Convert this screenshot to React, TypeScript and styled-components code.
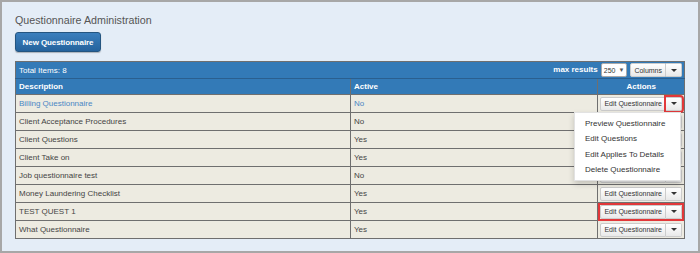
import styled, { createGlobalStyle, css } from 'styled-components';

const HEADER_BLUE = '#337ab7';
const ROW_BG = '#edebe1';
const GRID = '#6f6f6f';
const LINK = '#4a86c4';

const GlobalStyle = createGlobalStyle`
  html, body {
    margin: 0;
    padding: 0;
    background: #fff;
  }
  * {
    box-sizing: border-box;
  }
`;

interface IRow {
  description: string;
  active: string;
}

const rows: IRow[] = [
  { description: 'Billing Questionnaire', active: 'No' },
  { description: 'Client Acceptance Procedures', active: 'No' },
  { description: 'Client Questions', active: 'Yes' },
  { description: 'Client Take on', active: 'Yes' },
  { description: 'Job questionnaire test', active: 'No' },
  { description: 'Money Laundering Checklist', active: 'Yes' },
  { description: 'TEST QUEST 1', active: 'Yes' },
  { description: 'What Questionnaire', active: 'Yes' },
];

const menuItems = [
  'Preview Questionnaire',
  'Edit Questions',
  'Edit Applies To Details',
  'Delete Questionnaire',
];

const Frame = styled.div`
  width: 700px;
  height: 253px;
  border: 2px solid #a7a7a7;
  background: #e4edf7;
  padding: 11px 13px 0 13px;
  font-family: 'Liberation Sans', Arial, sans-serif;
  overflow: hidden;
`;

const Title = styled.h1`
  margin: 0;
  font-size: 10.7px;
  font-weight: normal;
  color: #555;
  line-height: 14px;
`;

const PrimaryButton = styled.button`
  display: block;
  margin-top: 5px;
  height: 20px;
  width: 86px;
  padding: 0;
  border: 1px solid #245580;
  border-radius: 3px;
  background: linear-gradient(#3b7fbd, #25639d);
  color: #fff;
  font-family: inherit;
  font-size: 8px;
  font-weight: bold;
  letter-spacing: -0.1px;
  box-shadow: 0 1px 1px rgba(0, 0, 0, 0.25);
`;

const Table = styled.table`
  margin-top: 9px;
  width: 670px;
  border-collapse: collapse;
  border: 1px solid ${GRID};
  font-size: 8px;
`;

const ToolbarCell = styled.th`
  background: ${HEADER_BLUE};
  color: #fff;
  height: 17px;
  padding: 0 2px 0 3px;
  border-bottom: 1px solid #2a5f8f;
  font-weight: normal;
  text-align: left;
`;

const Toolbar = styled.div`
  display: flex;
  align-items: center;
  justify-content: space-between;
`;

const ToolbarRight = styled.div`
  display: flex;
  align-items: center;
  gap: 3px;
`;

const MaxLabel = styled.span`
  font-weight: bold;
  font-size: 8px;
  margin-top: -2px;
`;

const Select = styled.span`
  display: inline-flex;
  align-items: center;
  gap: 3px;
  height: 14px;
  padding: 0 2px;
  background: #fff;
  border: 1px solid #aaa;
  border-radius: 2px;
  color: #333;
  font-size: 7px;
`;

const HeadCell = styled.th<{ $center?: boolean }>`
  background: ${HEADER_BLUE};
  color: #fff;
  height: 16px;
  padding: 0 3px;
  font-weight: bold;
  text-align: ${(p) => (p.$center ? 'center' : 'left')};
  border-left: 1px solid ${GRID};
  &:first-child {
    border-left: none;
  }
`;

const Cell = styled.td<{ $link?: boolean; $actions?: boolean }>`
  background: ${ROW_BG};
  color: ${(p) => (p.$link ? LINK : '#444')};
  height: 18px;
  padding: 0 3px;
  border-top: 1px solid ${GRID};
  border-left: 1px solid ${GRID};
  &:first-child {
    border-left: none;
  }
  ${(p) =>
    p.$actions &&
    css`
      width: 85px;
      padding: 0 2px;
      position: relative;
    `}
`;

const Group = styled.div<{ $highlight?: boolean }>`
  display: inline-flex;
  height: 14px;
  vertical-align: middle;
  ${(p) =>
    p.$highlight &&
    css`
      outline: 2px solid #e2383a;
    `}
`;

const GroupButton = styled.span<{ $highlight?: boolean }>`
  display: inline-flex;
  align-items: center;
  justify-content: center;
  height: 14px;
  padding: 0 3px;
  border: 1px solid #ccc;
  border-radius: 2px 0 0 2px;
  background: linear-gradient(#fff, #e9e9e9);
  color: #333;
  font-size: 7px;
  white-space: nowrap;
  & + & {
    border-left: none;
    border-radius: 0 2px 2px 0;
    width: 16px;
  }
  ${(p) =>
    p.$highlight &&
    css`
      outline: 2px solid #e2383a;
    `}
`;

const Caret = styled.span`
  width: 0;
  height: 0;
  border-left: 3px solid transparent;
  border-right: 3px solid transparent;
  border-top: 3px solid #333;
`;

const SmallCaret = styled.span`
  font-size: 6px;
  color: #555;
`;

const Menu = styled.ul`
  position: absolute;
  top: 17px;
  right: 3px;
  margin: 0;
  padding: 3px 0;
  list-style: none;
  width: 107px;
  background: #fff;
  border: 1px solid #e2e2e2;
  box-shadow: 0 3px 6px rgba(0, 0, 0, 0.18);
  z-index: 5;
`;

const MenuItem = styled.li`
  padding: 0 10px;
  line-height: 15.3px;
  font-size: 8px;
  color: #333;
  white-space: nowrap;
`;

export default function App() {
  return (
    <>
      <GlobalStyle />
      <Frame>
        <Title>Questionnaire Administration</Title>
        <PrimaryButton>New Questionnaire</PrimaryButton>
        <Table>
          <thead>
            <tr>
              <ToolbarCell colSpan={3}>
                <Toolbar>
                  <span>Total Items: 8</span>
                  <ToolbarRight>
                    <MaxLabel>max results</MaxLabel>
                    <Select>
                      250 <SmallCaret>&#9660;</SmallCaret>
                    </Select>
                    <Group>
                      <GroupButton>Columns</GroupButton>
                      <GroupButton>
                        <Caret />
                      </GroupButton>
                    </Group>
                  </ToolbarRight>
                </Toolbar>
              </ToolbarCell>
            </tr>
            <tr>
              <HeadCell style={{ width: 335 }}>Description</HeadCell>
              <HeadCell>Active</HeadCell>
              <HeadCell $center>Actions</HeadCell>
            </tr>
          </thead>
          <tbody>
            {rows.map((row, i) => (
              <tr key={row.description}>
                <Cell $link={i === 0}>{row.description}</Cell>
                <Cell $link={i === 0}>{row.active}</Cell>
                <Cell $actions>
                  <Group $highlight={i === 6}>
                    <GroupButton>Edit Questionnaire</GroupButton>
                    <GroupButton $highlight={i === 0}>
                      <Caret />
                    </GroupButton>
                  </Group>
                  {i === 0 && (
                    <Menu>
                      {menuItems.map((item) => (
                        <MenuItem key={item}>{item}</MenuItem>
                      ))}
                    </Menu>
                  )}
                </Cell>
              </tr>
            ))}
          </tbody>
        </Table>
      </Frame>
    </>
  );
}
